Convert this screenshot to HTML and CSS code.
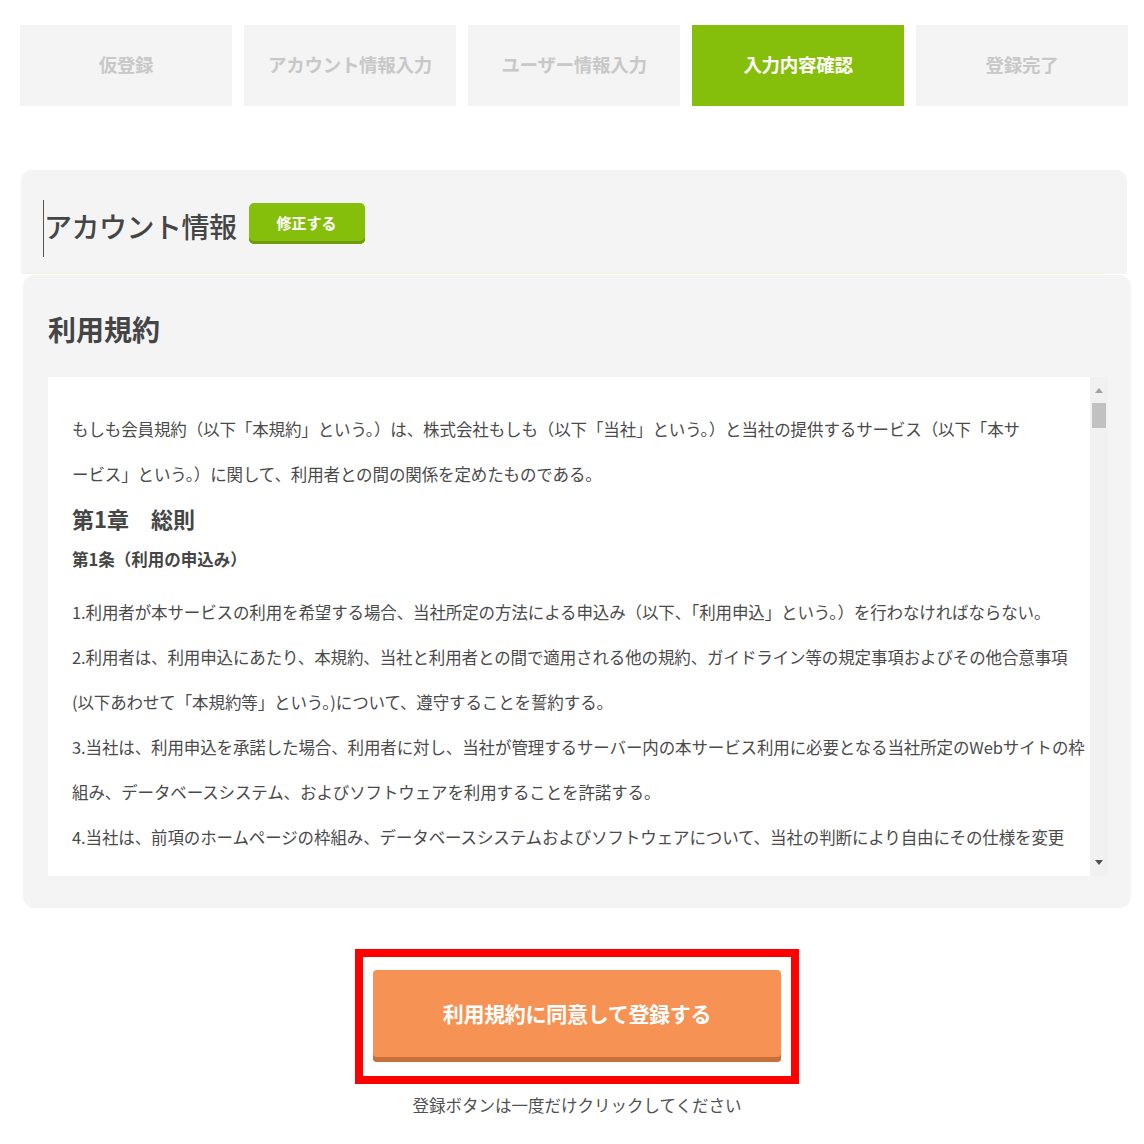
FILE: index.html
```html
<!DOCTYPE html>
<html lang="ja">
<head>
<meta charset="utf-8">
<title>入力内容確認</title>
<link rel="stylesheet" href="styles.css">
</head>
<body>
<div class="page">
  <ol class="steps">
    <li class="step">仮登録</li>
    <li class="step">アカウント情報入力</li>
    <li class="step">ユーザー情報入力</li>
    <li class="step is-active">入力内容確認</li>
    <li class="step">登録完了</li>
  </ol>

  <section class="acc">
    <div class="acc-head">
      <h2 class="acc-title">アカウント情報</h2>
      <button class="edit-btn" type="button">修正する</button>
    </div>
    <div class="acc-rule"></div>
  </section>

  <section class="terms">
    <h2 class="terms-title">利用規約</h2>
    <div class="terms-box">
      <div class="terms-text">
        <p class="para">もしも会員規約（以下「本規約」という。）は、株式会社もしも（以下「当社」という。）と当社の提供するサービス（以下「本サ<br>ービス」という。）に関して、利用者との間の関係を定めたものである。</p>
        <h3 class="chapter">第1章　総則</h3>
        <h4 class="article">第1条（利用の申込み）</h4>
        <p class="para gap">1.利用者が本サービスの利用を希望する場合、当社所定の方法による申込み（以下、「利用申込」という。）を行わなければならない。</p>
        <p class="para">2.利用者は、利用申込にあたり、本規約、当社と利用者との間で適用される他の規約、ガイドライン等の規定事項およびその他合意事項<br>(以下あわせて「本規約等」という。)について、遵守することを誓約する。</p>
        <p class="para">3.当社は、利用申込を承諾した場合、利用者に対し、当社が管理するサーバー内の本サービス利用に必要となる当社所定のWebサイトの枠<br>組み、データベースシステム、およびソフトウェアを利用することを許諾する。</p>
        <p class="para">4.当社は、前項のホームページの枠組み、データベースシステムおよびソフトウェアについて、当社の判断により自由にその仕様を変更<br><span class="last">することができ、利用者はこれに同意するものとする。</span></p>
      </div>
      <div class="sbar">
        <div class="sbar-btn"><span class="tri-up"></span></div>
        <div class="sbar-thumb"></div>
        <div class="sbar-fill"></div>
        <div class="sbar-btn"><span class="tri-down"></span></div>
      </div>
    </div>
  </section>

  <div class="submit">
    <div class="highlight">
      <button class="agree-btn" type="button">利用規約に同意して登録する</button>
    </div>
    <p class="note">登録ボタンは一度だけクリックしてください</p>
  </div>
</div>
</body>
</html>
```

FILE: styles.css
```css
* { box-sizing: border-box; }

html, body {
  margin: 0;
  padding: 0;
  background: #ffffff;
}

body {
  font-family: "Noto Sans CJK JP", "Noto Sans", sans-serif;
  color: #4d4d4d;
}

.page {
  width: 1108px;
  margin-left: 20px;
  padding-top: 25px;
}

/* steps */
.steps {
  list-style: none;
  margin: 0;
  padding: 0;
  display: grid;
  grid-template-columns: repeat(5, 1fr);
  column-gap: 12px;
}

.step {
  height: 81px;
  background: #f4f4f4;
  color: #c8c8c8;
  font-weight: 700;
  font-size: 18.5px;
  display: flex;
  align-items: center;
  justify-content: center;
  letter-spacing: -0.3px;
  padding-bottom: 4px;
}

.step.is-active {
  background: #86bf0b;
  color: #ffffff;
}

/* account panel */
.acc {
  margin-top: 64px;
  margin-left: 1px;
  width: 1106px;
  background: #f4f4f4;
  border-radius: 10px 10px 0 0;
  padding: 30px 0 0 22px;
}

.acc-head {
  display: flex;
  align-items: flex-start;
  gap: 12px;
  padding-bottom: 16px;
}

.acc-title {
  margin: 0;
  font-size: 28px;
  font-weight: 500;
  line-height: 52px;
  height: 57px;
  color: #454545;
  border-left: 1px solid #555555;
  letter-spacing: -0.5px;
}

.edit-btn {
  margin-top: 3px;
  width: 116px;
  height: 41px;
  border: 0;
  border-radius: 5px;
  background: #86bf0b;
  box-shadow: inset 0 -3px 0 #6d9c08;
  color: #ffffff;
  font-family: inherit;
  font-size: 15px;
  font-weight: 700;
  padding: 0 0 3px;
}

.acc-rule {
  height: 1px;
  background: #eef4d8;
  margin-right: 22px;
  margin-left: -12px;
}

/* terms panel */
.terms {
  margin-top: 1px;
  margin-left: 3px;
  width: 1108px;
  background: #f4f4f4;
  border-radius: 12px;
  padding: 34px 23px 32px 25px;
}

.terms-title {
  margin: 0 0 28px;
  font-size: 28px;
  font-weight: 700;
  line-height: 40px;
  color: #454545;
}

.terms-box {
  display: flex;
  height: 499px;
  background: #ffffff;
}

.terms-text {
  flex: 1;
  overflow: hidden;
  padding: 30px 0 0 24px;
  font-size: 16.5px;
  color: #4a4a4a;
}

.para {
  margin: 0;
  line-height: 45px;
  white-space: nowrap;
  letter-spacing: -0.12px;
}

.para .last {
  position: relative;
  top: 4px;
}

.para.gap {
  margin-top: 16px;
}

.chapter {
  margin: 3px 0 0;
  font-size: 22px;
  font-weight: 700;
  line-height: 36px;
  color: #454545;
}

.article {
  margin: 8px 0 0;
  font-size: 16.5px;
  font-weight: 700;
  line-height: 30px;
  color: #454545;
}

/* fake scrollbar */
.sbar {
  width: 18px;
  background: #f1f1f1;
  display: flex;
  flex-direction: column;
}

.sbar-btn {
  height: 26px;
  display: flex;
  align-items: center;
  justify-content: center;
}

.sbar-btn:last-child {
  height: 28px;
}

.tri-up {
  width: 0;
  height: 0;
  border-left: 4px solid transparent;
  border-right: 4px solid transparent;
  border-bottom: 5px solid #a3a3a3;
}

.tri-down {
  width: 0;
  height: 0;
  border-left: 4px solid transparent;
  border-right: 4px solid transparent;
  border-top: 5px solid #505050;
}

.sbar-thumb {
  height: 25px;
  margin: 0 2px;
  background: #c1c1c1;
}

.sbar-fill {
  flex: 1;
}

/* submit */
.submit {
  margin-top: 41px;
  display: flex;
  flex-direction: column;
  align-items: center;
  padding-left: 6px;
}

.highlight {
  border: 8px solid #ff0000;
  padding: 13px 10px 14px;
  background: #ffffff;
}

.agree-btn {
  display: block;
  width: 408px;
  height: 92px;
  border: 0;
  border-radius: 4px;
  background: #f69354;
  box-shadow: inset 0 -5px 0 #c96f3a;
  color: #ffffff;
  font-family: inherit;
  font-size: 21px;
  font-weight: 700;
  padding: 0 0 7px;
  letter-spacing: -0.3px;
}

.note {
  margin: 9px 0 0;
  font-size: 16.5px;
  line-height: 24px;
  color: #505050;
}
```
